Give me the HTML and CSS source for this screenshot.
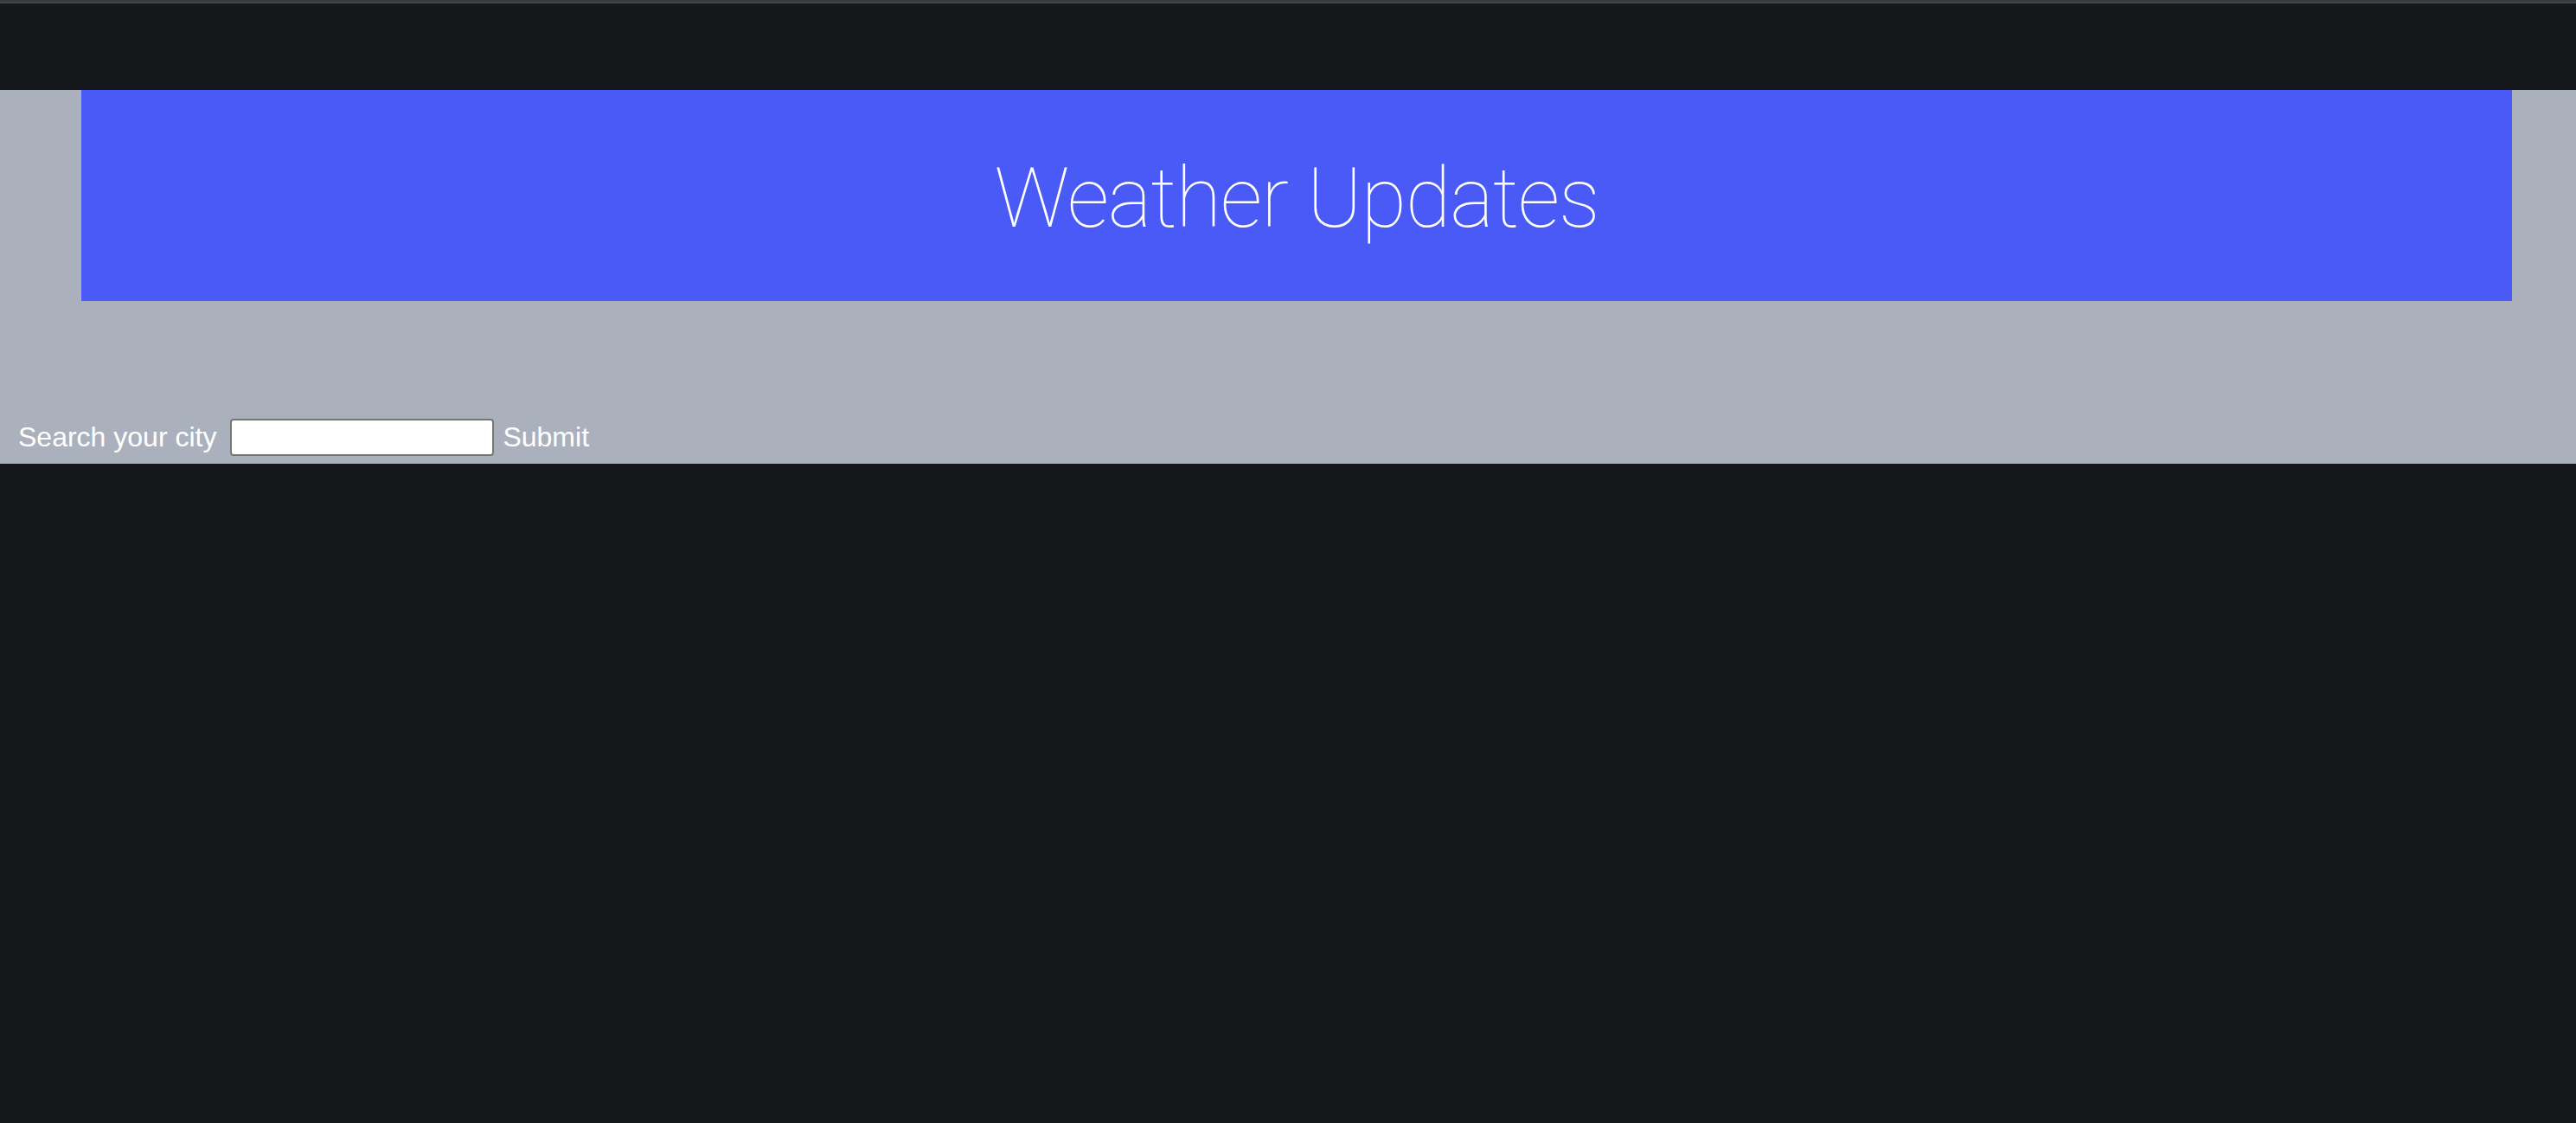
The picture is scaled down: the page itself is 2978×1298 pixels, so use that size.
FILE: index.html
```html
<!DOCTYPE html>
<html lang="en">
<head>
<meta charset="utf-8">
<title>Weather Updates</title>
<link rel="stylesheet" href="styles.css">
</head>
<body>
<div class="topline"></div>
<div class="topbar"></div>
<section class="app">
  <header class="banner">
    <h1 class="banner-title">Weather Updates</h1>
  </header>
  <form class="search">
    <label class="search-label" for="city">Search your city</label>
    <input class="search-input" id="city" type="text">
    <button class="search-submit" type="button">Submit</button>
  </form>
</section>
</body>
</html>
```

FILE: styles.css
```css
* {
  box-sizing: border-box;
}

html, body {
  margin: 0;
  padding: 0;
  background: #16171b;
  height: 100%;
}

body {
  font-family: "Liberation Sans", Arial, sans-serif;
  color: #ffffff;
}

.topline {
  height: 4px;
  background: linear-gradient(#393b3a 0 50%, #444645 50% 100%);
}

.topbar {
  height: 100px;
  background: #16171b;
}

.app {
  background: #abb1bc;
  padding-bottom: 9px;
}

.banner {
  margin: 0 74px 0 94px;
  height: 244px;
  background: #4a5af6;
  display: flex;
  align-items: center;
  justify-content: center;
  padding-top: 6px;
}

.banner-title {
  margin: 0;
  font-family: Roboto, "Liberation Sans", sans-serif;
  font-weight: 100;
  font-size: 96px;
  line-height: 1.172;
  letter-spacing: -1.2px;
  color: #ffffff;
}

.search {
  margin: 136px 0 0 0;
  padding-left: 21px;
  display: flex;
  align-items: center;
  gap: 9px;
  height: 43px;
}

.search-label {
  font-size: 32px;
  color: #ffffff;
  margin-right: 7px;
}

.search-input {
  width: 305px;
  height: 43px;
  border: 2px solid #767676;
  border-radius: 4px;
  background: #ffffff;
  margin: 0;
  padding: 0 4px;
  font-size: 26px;
}

.search-submit {
  font-family: "Liberation Sans", Arial, sans-serif;
  font-size: 32px;
  color: #ffffff;
  background: none;
  border: none;
  padding: 0;
  margin: 0 0 0 1px;
  cursor: pointer;
}
```
